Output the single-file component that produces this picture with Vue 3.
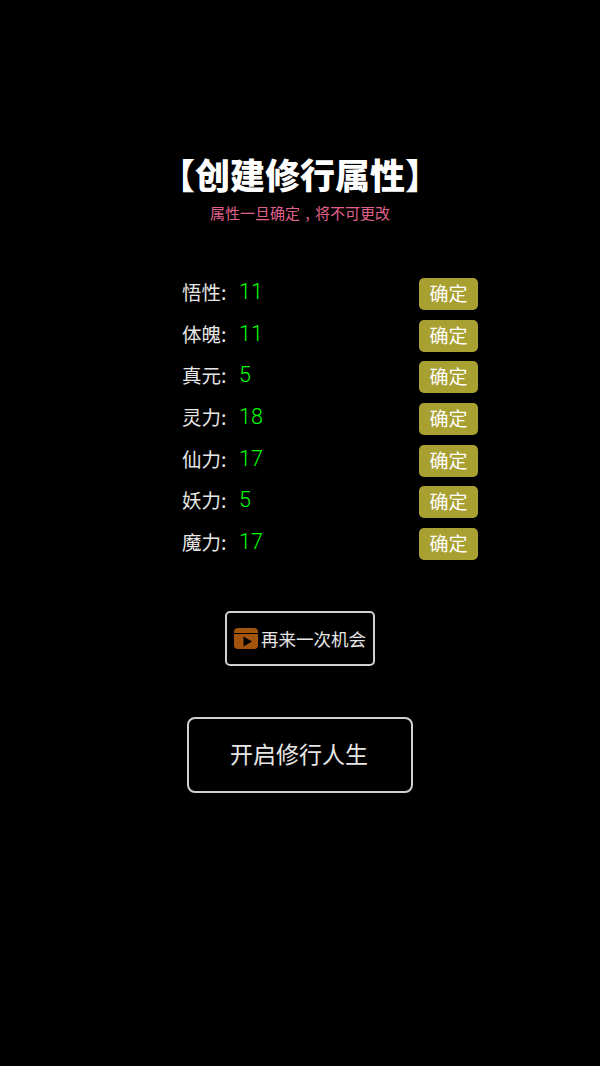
<template>
  <div class="page">
    <h1 class="title">【创建修行属性】</h1>
    <p class="subtitle">属性一旦确定<span class="comma">,</span>将不可更改</p>

    <ul class="attr-list">
      <li v-for="attr in attrs" :key="attr.name" class="attr-row">
        <span class="attr-name">{{ attr.name }}:</span>
        <span class="attr-value">{{ attr.value }}</span>
        <button class="confirm-btn">确定</button>
      </li>
    </ul>

    <button class="retry-btn">
      <svg class="video-icon" viewBox="0 0 24 21" width="24" height="21">
        <path d="M4 0h16a4 4 0 0 1 4 4v1H0V4a4 4 0 0 1 4-4z" fill="#a3530c" />
        <path d="M0 6h24v11a4 4 0 0 1-4 4H4a4 4 0 0 1-4-4z" fill="#a3530c" />
        <path d="M9.500 8.500l8.500 5-8.500 5z" fill="#000" />
      </svg>
      <span>再来一次机会</span>
    </button>

    <button class="start-btn">开启修行人生</button>
  </div>
</template>

<script setup>
const attrs = [
  { name: '悟性', value: 11 },
  { name: '体魄', value: 11 },
  { name: '真元', value: 5 },
  { name: '灵力', value: 18 },
  { name: '仙力', value: 17 },
  { name: '妖力', value: 5 },
  { name: '魔力', value: 17 }
];
</script>

<style>
html, body { margin: 0; background: #000; }
</style>

<style scoped>
.page {
  width: 600px; height: 1066px; box-sizing: border-box;
  padding-top: 152px;
  background: #000;
  display: flex; flex-direction: column; align-items: center;
  font-family: "Noto Sans CJK SC", "Liberation Sans", sans-serif;
}

.title {
  margin: 0; height: 44px;
  font-size: 35px; line-height: 44px; font-weight: 900;
  color: #fff;
}

.subtitle {
  margin: 6px 0 0; height: 22px;
  font-size: 15px; line-height: 22px;
  color: #e0608c;
}

.comma { display: inline-block; width: 15px; text-align: center; }

.attr-list {
  list-style: none; margin: 54px 0 0 60px; padding: 0;
  width: 296px;
  display: flex; flex-direction: column; gap: 9.670px;
}

.attr-row { height: 32px; display: flex; align-items: center; }

.attr-name { width: 57px; font-size: 19.500px; line-height: 28px; margin-top: -4px; color: #e6e6e6; }

.attr-value {
  font-family: Roboto, "Liberation Sans", sans-serif; font-weight: 300;
  font-size: 21.500px; line-height: 28px; margin-top: -4px;
  color: #00ff00;
}

.confirm-btn {
  margin-left: auto;
  width: 59px; height: 32px; padding: 0 0 2px;
  border: none; border-radius: 5px;
  background: #a9a032;
  color: #fff; font-family: inherit; font-size: 19px; line-height: 30px;
}

.retry-btn {
  margin-top: 51px;
  width: 150px; height: 55px; padding: 0;
  box-sizing: border-box;
  border: 2px solid #d0d0d0; border-radius: 5px;
  background: #000;
  display: flex; align-items: center; justify-content: center; gap: 3px;
  color: #e6e6e6; font-family: inherit; font-size: 17.500px;
}

.video-icon { flex: none; }

.start-btn {
  margin-top: 51px;
  width: 226px; height: 76px; padding: 0 2px 3px 0;
  box-sizing: border-box;
  border: 2px solid #d0d0d0; border-radius: 8px;
  background: #000;
  color: #e6e6e6; font-family: inherit; font-size: 23px;
}
</style>
